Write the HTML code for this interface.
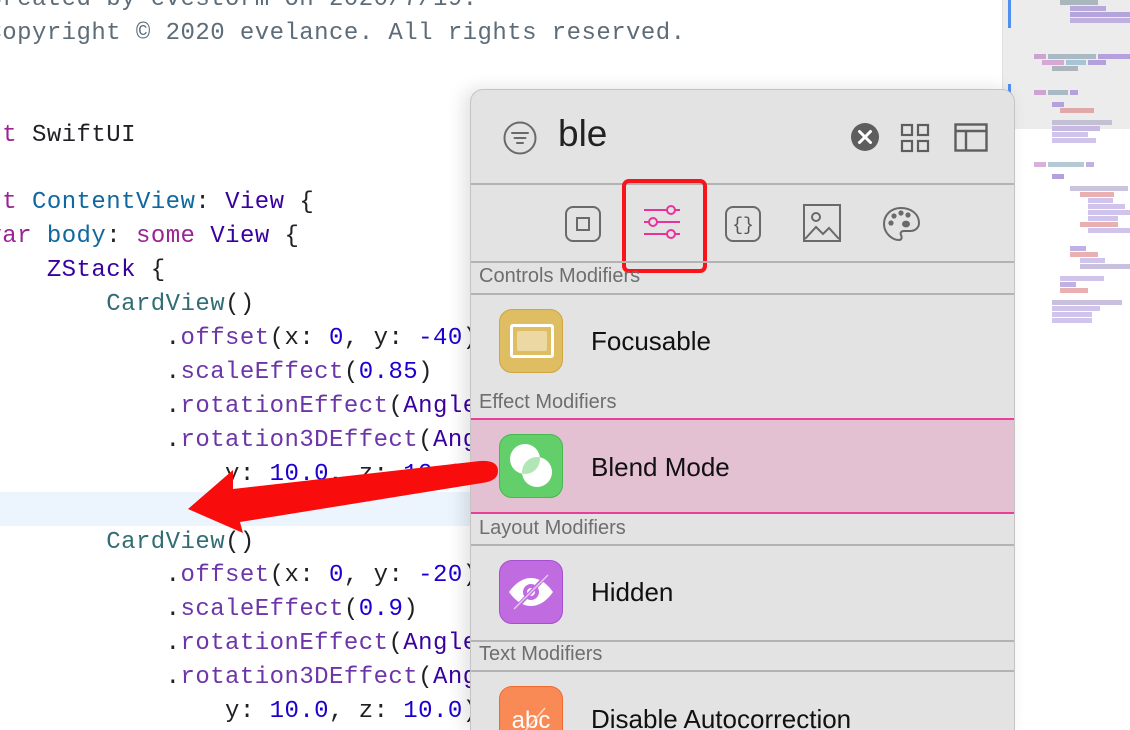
<!DOCTYPE html>
<html><head><meta charset="utf-8"><style>
*{margin:0;padding:0;box-sizing:border-box}
html,body{width:1130px;height:730px;overflow:hidden}
body{background:#fff;position:relative;font-family:"Liberation Sans",sans-serif}
.clip{position:absolute;left:0;top:0;width:1130px;height:730px;overflow:hidden}
.code{position:absolute;left:-72px;top:-17px;font-family:"Liberation Mono",monospace;font-size:24px;letter-spacing:0.45px;line-height:33.9px;color:#1f1f24;white-space:pre}
.cm{color:#5d6c79}.kw{color:#9b2393}.tb{color:#0f68a0}.tp{color:#3900a0}.cv{color:#326d74}.me{color:#6c36a9}.nu{color:#1c00cf}
.hl{position:absolute;left:0;top:492px;width:480px;height:34px;background:#ecf4fe}
.mm{position:absolute;left:1002px;top:0;width:128px;height:730px;background:#fff;border-left:1px solid #e0e0e0;overflow:hidden}
.mm .g{position:absolute;left:0;top:0;width:128px;height:129px;background:#ececec}
.mm i{position:absolute;height:5px;display:block}
.pop{position:absolute;left:470px;top:89px;width:545px;height:641px;background:#e3e3e4;border:1px solid #c4c4c4;border-bottom:none;border-radius:13px 13px 0 0;box-shadow:-6px 0 18px rgba(0,0,0,0.12);overflow:hidden}
.sep{position:absolute;left:0;width:543px;height:2px;background:#b3b3b3}
.hd{position:absolute;left:8px;font-size:20px;color:#6e6e6e}
.row{position:absolute;left:0;width:543px}
.ic{position:absolute;left:28px;width:64px;height:64px;border-radius:13px}
.lb{position:absolute;left:120px;font-size:26px;color:#111}
</style></head><body>
<div class="clip">
<div class="hl"></div>
<div class="code"><span class="cm">//  Created by evestorm on 2020/7/19.</span>
<span class="cm">//  Copyright © 2020 evelance. All rights reserved.</span>


<span class="kw">import</span> SwiftUI

<span class="kw">struct</span> <span class="tb">ContentView</span>: <span class="tp">View</span> {
    <span class="kw">var</span> <span class="tb">body</span>: <span class="kw">some</span> <span class="tp">View</span> {
        <span class="tp">ZStack</span> {
            <span class="cv">CardView</span>()
                .<span class="me">offset</span>(x: <span class="nu">0</span>, y: <span class="nu">-40</span>)
                .<span class="me">scaleEffect</span>(<span class="nu">0.85</span>)
                .<span class="me">rotationEffect</span>(<span class="tp">Angle</span>
                .<span class="me">rotation3DEffect</span>(<span class="tp">Angle</span>
                    y: <span class="nu">10.0</span>, z: <span class="nu">10.0</span>)

            <span class="cv">CardView</span>()
                .<span class="me">offset</span>(x: <span class="nu">0</span>, y: <span class="nu">-20</span>)
                .<span class="me">scaleEffect</span>(<span class="nu">0.9</span>)
                .<span class="me">rotationEffect</span>(<span class="tp">Angle</span>
                .<span class="me">rotation3DEffect</span>(<span class="tp">Angle</span>
                    y: <span class="nu">10.0</span>, z: <span class="nu">10.0</span>)</div>

<div class="mm"><div class="g"></div>
<i style="left:5px;top:0;width:3px;height:28px;background:#4f8ff0"></i>
<i style="left:5px;top:84px;width:3px;height:10px;background:#4f8ff0"></i>
<i style="left:57px;top:0;width:38px;background:#a9b6bb"></i>
<i style="left:67px;top:6px;width:36px;background:#b9a8dc"></i>
<i style="left:67px;top:12px;width:60px;background:#b4a4dc"></i>
<i style="left:67px;top:18px;width:60px;background:#c0b0e0"></i>
<i style="left:31px;top:54px;width:12px;background:#cda4cf"></i>
<i style="left:45px;top:54px;width:48px;background:#a9bac4"></i>
<i style="left:95px;top:54px;width:33px;background:#b4a0dc"></i>
<i style="left:39px;top:60px;width:22px;background:#d4aad4"></i>
<i style="left:63px;top:60px;width:20px;background:#a9c4d4"></i>
<i style="left:85px;top:60px;width:18px;background:#b4a0dc"></i>
<i style="left:49px;top:66px;width:26px;background:#aab6b9"></i>
<i style="left:31px;top:90px;width:12px;background:#cda4cf"></i>
<i style="left:45px;top:90px;width:20px;background:#a9bac4"></i>
<i style="left:67px;top:90px;width:8px;background:#b4a0dc"></i>
<i style="left:49px;top:102px;width:12px;background:#b4a0dc"></i>
<i style="left:57px;top:108px;width:34px;background:#e0a8a8"></i>
<i style="left:49px;top:120px;width:60px;background:#c4c0d4"></i>
<i style="left:49px;top:126px;width:48px;background:#c8b8e4"></i>
<i style="left:49px;top:132px;width:36px;background:#d0c4ec"></i>
<i style="left:49px;top:138px;width:44px;background:#d0c4ec"></i>
<i style="left:31px;top:162px;width:12px;background:#d8b0d8"></i>
<i style="left:45px;top:162px;width:36px;background:#b4cad4"></i>
<i style="left:83px;top:162px;width:8px;background:#c0b0e4"></i>
<i style="left:49px;top:174px;width:12px;background:#b4a0dc"></i>
<i style="left:67px;top:186px;width:58px;background:#cac4dc"></i>
<i style="left:77px;top:192px;width:34px;background:#e8b0b0"></i>
<i style="left:85px;top:198px;width:25px;background:#d0c4ec"></i>
<i style="left:85px;top:204px;width:37px;background:#d0c4ec"></i>
<i style="left:85px;top:210px;width:43px;background:#d0c4ec"></i>
<i style="left:85px;top:216px;width:30px;background:#d0c4ec"></i>
<i style="left:77px;top:222px;width:38px;background:#e8b0b0"></i>
<i style="left:85px;top:228px;width:43px;background:#d0c4ec"></i>
<i style="left:67px;top:246px;width:16px;background:#c0b0e4"></i>
<i style="left:67px;top:252px;width:28px;background:#e8b0b0"></i>
<i style="left:77px;top:258px;width:25px;background:#d0c4ec"></i>
<i style="left:77px;top:264px;width:50px;background:#c8c0dc"></i>
<i style="left:57px;top:276px;width:44px;background:#d0c4ec"></i>
<i style="left:57px;top:282px;width:16px;background:#c0b0e4"></i>
<i style="left:57px;top:288px;width:28px;background:#e8b0b0"></i>
<i style="left:49px;top:300px;width:70px;background:#c8c0dc"></i>
<i style="left:49px;top:306px;width:48px;background:#d0c4ec"></i>
<i style="left:49px;top:312px;width:40px;background:#d0c4ec"></i>
<i style="left:49px;top:318px;width:40px;background:#d0c4ec"></i>
</div>

<div class="pop">
  <svg style="position:absolute;left:31px;top:30px" width="36" height="36" viewBox="0 0 36 36"><circle cx="18" cy="18" r="15.5" fill="none" stroke="#6a6a6a" stroke-width="2"/><path d="M10 13h16M12.5 18h11M15 23h6" stroke="#6a6a6a" stroke-width="2" stroke-linecap="round"/></svg>
  <div style="position:absolute;left:87px;top:23px;font-size:37px;color:#222">ble</div>
  <svg style="position:absolute;left:379px;top:32px" width="30" height="30" viewBox="0 0 30 30"><circle cx="15" cy="15" r="14" fill="#5e5e5e"/><path d="M9.5 9.5l11 11M20.5 9.5l-11 11" stroke="#fff" stroke-width="3" stroke-linecap="round"/></svg>
  <svg style="position:absolute;left:429px;top:33px" width="30" height="30" viewBox="0 0 30 30" fill="none" stroke="#5e5e5e" stroke-width="2.2"><rect x="2" y="2" width="10" height="10"/><rect x="18" y="2" width="10" height="10"/><rect x="2" y="18" width="10" height="10"/><rect x="18" y="18" width="10" height="10"/></svg>
  <svg style="position:absolute;left:483px;top:33px" width="34" height="30" viewBox="0 0 34 30" fill="none" stroke="#5e5e5e" stroke-width="2.4"><rect x="1.5" y="1.5" width="31" height="26"/><path d="M1.5 8h31M12 8v19.5"/></svg>
  <div class="sep" style="top:93px"></div>
  <svg style="position:absolute;left:93px;top:115px" width="38" height="38" viewBox="0 0 38 38" fill="none" stroke="#6a6a6a" stroke-width="2"><rect x="2" y="2" width="34" height="34" rx="7"/><rect x="13" y="13" width="12" height="12"/></svg>
  <svg style="position:absolute;left:171px;top:112px" width="40" height="40" viewBox="0 0 40 40" fill="none" stroke="#e8339a" stroke-width="2"><path d="M2 8h36M2 20h36M2 32h36"/><circle cx="29" cy="8" r="4" fill="#e3e3e4"/><circle cx="11" cy="20" r="4" fill="#e3e3e4"/><circle cx="29" cy="32" r="4" fill="#e3e3e4"/></svg>
  <svg style="position:absolute;left:253px;top:115px" width="38" height="38" viewBox="0 0 38 38" fill="none" stroke="#6a6a6a" stroke-width="2"><rect x="2" y="2" width="34" height="34" rx="7"/><text x="19" y="25" font-family="Liberation Mono" font-size="18" fill="#555" stroke="none" text-anchor="middle">{}</text></svg>
  <svg style="position:absolute;left:332px;top:114px" width="38" height="38" viewBox="0 0 38 38" fill="none" stroke="#6a6a6a" stroke-width="2"><rect x="1" y="1" width="36" height="36"/><circle cx="13" cy="13" r="4"/><path d="M2 35l11-12 7 7 6-6 10 11"/></svg>
  <svg style="position:absolute;left:411px;top:116px" width="38" height="36" viewBox="0 0 38 36" fill="none" stroke="#6a6a6a" stroke-width="2"><path d="M19 2C9 2 2 9 2 18s8 16 15 16c3 0 3-3 2-5s0-4 3-4h6c6 0 9-4 9-8C37 8 29 2 19 2z"/><circle cx="9" cy="17" r="1.6" fill="#6a6a6a"/><circle cx="12" cy="10" r="1.6" fill="#6a6a6a"/><circle cx="19" cy="7" r="1.6" fill="#6a6a6a"/><circle cx="26" cy="9" r="1.6" fill="#6a6a6a"/><ellipse cx="24" cy="18" rx="3" ry="2.4" fill="#6a6a6a"/></svg>
  <div style="position:absolute;left:151px;top:89px;width:85px;height:94px;border:4px solid #f8141a;border-radius:7px"></div>
  <div class="sep" style="top:171px"></div>
  <div class="hd" style="top:175px">Controls Modifiers</div>
  <div class="sep" style="top:203px"></div>
  <div class="row" style="top:205px;height:95px">
    <div class="ic" style="top:14px;background:#dfbd62;border:1px solid #cfa640"><div style="position:absolute;left:10px;top:14px;width:44px;height:34px;border:3px solid #fff;border-radius:3px"></div><div style="position:absolute;left:17px;top:21px;width:30px;height:20px;background:#ecd8a2;border-radius:2px"></div></div>
    <div class="lb" style="top:31px">Focusable</div>
  </div>
  <div class="hd" style="top:301px">Effect Modifiers</div>
  <div class="row" style="top:328px;height:96px;background:#e4c0d3;border-top:2px solid #e8409a;border-bottom:2px solid #e8409a">
    <div class="ic" style="top:14px;background:#62cf6a;border:1px solid #46b84e"><svg width="64" height="64" viewBox="0 0 64 64" style="position:absolute;left:-1px;top:-1px"><circle cx="26" cy="25" r="15" fill="#fff"/><circle cx="38" cy="38" r="15" fill="#fff"/><clipPath id="c"><circle cx="26" cy="25" r="15"/></clipPath><circle cx="38" cy="38" r="15" fill="#b3e6b7" clip-path="url(#c)"/></svg></div>
    <div class="lb" style="top:32px">Blend Mode</div>
  </div>
  <div class="hd" style="top:427px">Layout Modifiers</div>
  <div class="sep" style="top:454px"></div>
  <div class="row" style="top:456px;height:95px">
    <div class="ic" style="top:14px;background:#c06ce0;border:1px solid #a84ed0"><svg width="64" height="64" viewBox="0 0 64 64" style="position:absolute;left:-1px;top:-1px"><path d="M10 32c7-10 15-14 22-14s15 4 22 14c-7 10-15 14-22 14s-15-4-22-14z" fill="#fff"/><circle cx="32" cy="32" r="8" fill="#c06ce0"/><circle cx="32" cy="32" r="4" fill="#fff"/><path d="M16 49L48 15" stroke="#c06ce0" stroke-width="4"/><path d="M15 49L49 15" stroke="#e6c8f0" stroke-width="1.5"/></svg></div>
    <div class="lb" style="top:31px">Hidden</div>
  </div>
  <div class="sep" style="top:550px"></div>
  <div class="hd" style="top:553px">Text Modifiers</div>
  <div class="sep" style="top:580px"></div>
  <div class="row" style="top:582px;height:59px;overflow:hidden">
    <div class="ic" style="top:14px;background:#f98a55;border:1px solid #f06a30"><svg width="64" height="64" viewBox="0 0 64 64" style="position:absolute;left:-1px;top:-1px"><text x="32" y="42" font-family="Liberation Sans" font-size="24" fill="#fff" text-anchor="middle">abc</text><path d="M18 54L46 22" stroke="#ffd8c4" stroke-width="1.5"/></svg></div>
    <div class="lb" style="top:32px">Disable Autocorrection</div>
  </div>
</div>

<svg style="position:absolute;left:0;top:0" width="1130" height="730"><path d="M188 509L233 470L233 489L480 461Q498 460 498 471Q498 481 482 483L240 522L243 533Z" fill="#f90c0c"/></svg>
</div>
</body></html>
